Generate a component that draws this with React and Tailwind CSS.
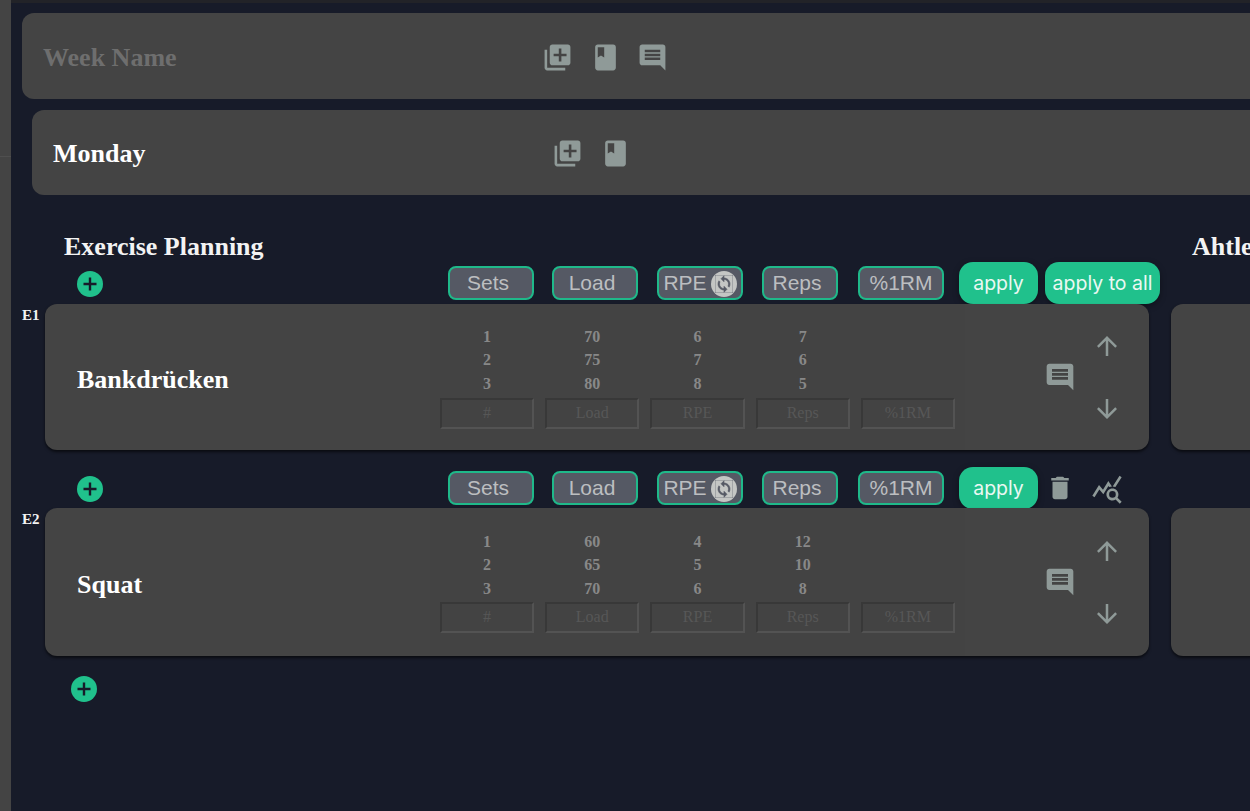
import React from "react";
import { MdLibraryAdd, MdBook, MdComment, MdArrowUpward, MdArrowDownward, MdDelete, MdQueryStats, MdSync } from "react-icons/md";

const serif = "font-['Liberation_Serif',serif]";

function Pill({ label, w, ml, sync, shift }) {
  return (
    <div className={`${w} ${ml} ${shift ? "pr-[6px]" : ""} h-[34px] flex items-center justify-center gap-[4px] rounded-[8px] border-2 border-[#1fb98a] bg-[#555964] text-[#bcbec0] text-[21px] font-['Liberation_Sans',sans-serif] shrink-0`}>
      <span className="leading-none pb-[2px]">{label}</span>
      {sync && (
        <span className="mt-[1px] w-[26px] h-[26px] rounded-full bg-[#c4c6c4] flex items-center justify-center text-[#555964]">
          <MdSync size={18} stroke="currentColor" strokeWidth={0.8} />
        </span>
      )}
    </div>
  );
}

function Apply({ label, w, ml }) {
  return (
    <div className={`${w} ${ml} pt-[1px] h-[42px] rounded-[14px] bg-[#20c18c] text-[#eaf8f3] text-[19.5px] font-['Inter',sans-serif] flex items-center justify-center shrink-0 shadow-[0_2px_6px_rgba(0,0,0,0.35)]`}>
      {label}
    </div>
  );
}

function AddButton({ className }) {
  return (
    <div className={`${className} w-[26px] h-[26px] rounded-full bg-[#20c18c] text-[#171b29] flex items-center justify-center shrink-0`}>
      <svg width="18" height="18" viewBox="0 0 18 18" fill="none" stroke="currentColor" strokeWidth="2.4">
        <path d="M9 2.5v13M2.5 9h13" />
      </svg>
    </div>
  );
}

function Toolbar({ all }) {
  return (
    <div className="flex items-center h-[42px] pl-[55px]">
      <AddButton className="mt-[2px]" />
      <Pill label="Sets" w="w-[86px]" ml="ml-[345px]" shift />
      <Pill label="Load" w="w-[86px]" ml="ml-[18px]" shift />
      <Pill label="RPE" w="w-[86px]" ml="ml-[19px]" sync />
      <Pill label="Reps" w="w-[76px]" ml="ml-[19px]" shift />
      <Pill label="%1RM" w="w-[86px]" ml="ml-[20px]" />
      <Apply label="apply" w="w-[79px]" ml="ml-[15px]" />
      {all ? (
        <Apply label="apply to all" w="w-[115px]" ml="ml-[7px]" />
      ) : (
        <>
          <MdDelete size={30} className="ml-[7px] text-[#8f9a98] shrink-0" />
          <MdQueryStats size={32} className="ml-[16px] mt-[1px] text-[#8f9a98] shrink-0" />
        </>
      )}
    </div>
  );
}

function Field({ placeholder }) {
  return (
    <input
      readOnly
      placeholder={placeholder}
      className={`${serif} w-full h-[31px] border-2 border-t-[#383838] border-l-[#383838] border-r-[#535353] border-b-[#535353] bg-transparent text-center text-[16px] placeholder:text-[#575757] outline-none`}
    />
  );
}

function SetTable({ rows, pt, fieldGap }) {
  const cols = ["#", "Load", "RPE", "Reps", "%1RM"];
  return (
    <div className={`${serif} ${pt} w-[535px] ml-[190px] px-[10px] flex flex-col self-stretch bg-[#434343]`}>
      {rows.map((row) => (
        <div key={row[0]} className="grid grid-cols-5 gap-x-[11px] h-[23.5px] items-center">
          {row.map((value, i) => (
            <div key={i} className="text-center text-[16px] font-bold leading-none text-[#888888]">{value}</div>
          ))}
          <div />
        </div>
      ))}
      <div className={`${fieldGap} grid grid-cols-5 gap-x-[11px]`}>
        {cols.map((c) => <Field key={c} placeholder={c} />)}
      </div>
    </div>
  );
}

function ExerciseCard({ code, name, rows, h, pt, fieldGap }) {
  return (
    <div className="flex">
      <div className={`${serif} w-[23px] font-bold text-[15px] text-[#f3f3f3] leading-[20px] pt-[1px]`}>{code}</div>
      <div className={`${h} w-[1104px] flex items-stretch rounded-[12px] bg-[#444444] shadow-[0_2px_3px_rgba(0,0,0,0.6)]`}>
        <div className={`${serif} w-[195px] pl-[32px] pt-[5px] self-center font-bold text-[26px] text-white leading-none`}>{name}</div>
        <SetTable rows={rows} pt={pt} fieldGap={fieldGap} />
        <MdComment size={32} className="ml-[79px] self-center text-[#8f9a98] shrink-0" />
        <div className="ml-[16px] flex flex-col items-center justify-center gap-[33px] text-[#8f9a98]">
          <MdArrowUpward size={30} />
          <MdArrowDownward size={30} />
        </div>
      </div>
    </div>
  );
}

function HeaderCard({ title, dim, comment, className, titleClass, iconClass }) {
  return (
    <div className={`${className} w-[1400px] flex items-center rounded-[12px] bg-[#444444] text-[#8f9a98]`}>
      <div className={`${serif} ${titleClass} pl-[21px] font-bold text-[26px] leading-none ${dim ? "text-[#6e6e6e]" : "text-white"}`}>{title}</div>
      <div className={`${iconClass} flex gap-[16.5px]`}>
        <MdLibraryAdd size={31} />
        <MdBook size={31} />
        {comment && <MdComment size={31} />}
      </div>
    </div>
  );
}

const bench = [[1, 70, 6, 7], [2, 75, 7, 6], [3, 80, 8, 5]];
const squat = [[1, 60, 4, 12], [2, 65, 5, 10], [3, 70, 6, 8]];

export default function App() {
  return (
    <div className="w-[1250px] h-[811px] overflow-hidden flex bg-[#171b29]">
      <div className="w-[11px] shrink-0 bg-[#444444] flex flex-col">
        <div className="h-[157px] border-b border-[#4f4f4f]" />
      </div>
      <div className="flex-1 min-w-0 flex flex-col overflow-hidden">
        <div className="h-[3px] bg-[#222328] shrink-0" />
        <div className="pl-[11px] pt-[10px] flex flex-col">
          <HeaderCard title="Week Name" dim comment className="h-[86px]" titleClass="w-[520px] pt-[4px]" iconClass="pt-[2px]" />
          <HeaderCard title="Monday" className="h-[85px] mt-[11px] ml-[10px]" titleClass="w-[520px] pt-[3px]" iconClass="pt-[1px]" />
          <div className="flex mt-[36px]">
            <div className="w-[1127px] shrink-0">
              <div className={`${serif} h-[31px] pl-[42px] font-bold text-[26px] leading-[31px] text-[#f3f3f3]`}>Exercise Planning</div>
              <Toolbar all />
              <ExerciseCard code="E1" name="Bankdrücken" rows={bench} h="h-[146px]" pt="pt-[21px]" fieldGap="mt-[2px]" />
              <div className="mt-[17px] -mb-[1px]"><Toolbar /></div>
              <ExerciseCard code="E2" name="Squat" rows={squat} h="h-[148px]" pt="pt-[22px]" fieldGap="mt-[1px]" />
              <AddButton className="ml-[49px] mt-[20px]" />
            </div>
            <div className="ml-[22px] w-[400px] shrink-0">
              <div className={`${serif} h-[31px] pl-[21px] font-bold text-[26px] leading-[31px] text-[#f3f3f3]`}>Ahtlete</div>
              <div className="h-[42px]" />
              <div className="h-[146px] rounded-[12px] bg-[#444444] shadow-[0_2px_3px_rgba(0,0,0,0.6)]" />
              <div className="h-[58px]" />
              <div className="h-[148px] rounded-[12px] bg-[#444444] shadow-[0_2px_3px_rgba(0,0,0,0.6)]" />
            </div>
          </div>
        </div>
      </div>
    </div>
  );
}
